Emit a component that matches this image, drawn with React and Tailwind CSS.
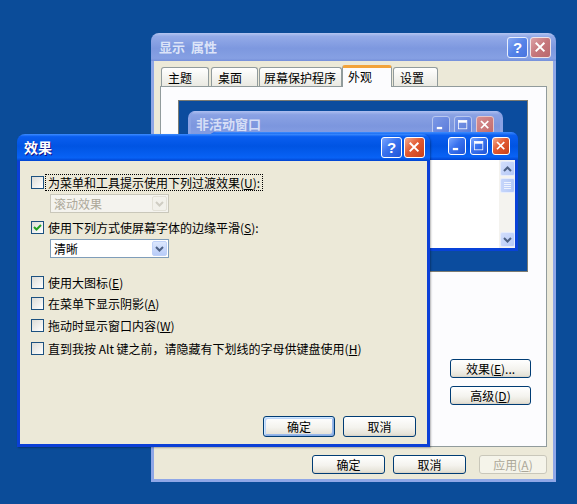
import React from "react";

const font = "font-['Noto_Sans_CJK_SC','Liberation_Sans',sans-serif]";

const capTones = {
  blue: "border-white bg-[linear-gradient(135deg,#7aa6ff_0%,#3a72ee_45%,#1f55d8_100%)]",
  red: "border-white bg-[linear-gradient(135deg,#f4ab8e_0%,#e25a32_45%,#c8401a_100%)]",
  dimBlue: "border-[#e8eefc] bg-[linear-gradient(135deg,#86a8f2_0%,#5583e8_50%,#4874df_100%)]",
  dimRed: "border-[#f1e4e6] bg-[linear-gradient(135deg,#dca2a6_0%,#c6767b_50%,#b9686e_100%)]",
  paleBlue: "border-[#b9c8ef] bg-[linear-gradient(135deg,#7d99e6_0%,#5a7bda_100%)]",
  paleRed: "border-[#e6c6c8] bg-[linear-gradient(135deg,#d68f92_0%,#c26b6c_100%)]",
};

function CapButton({ type, tone, size = "w-[21px] h-[21px]" }) {
  return (
    <div
      className={`${size} ${capTones[tone]} border rounded-[3px] flex items-center justify-center overflow-hidden shrink-0`}
    >
      {type === "help" && (
        <span className="font-['Liberation_Sans',sans-serif] text-[15px] font-bold leading-none text-white">
          ?
        </span>
      )}
      {type === "close" && (
        <svg viewBox="0 0 21 21" className="w-full h-full">
          <path d="M6 6 L14 14 M14 6 L6 14" stroke="white" strokeWidth="2.2" strokeLinecap="square" />
        </svg>
      )}
      {type === "min" && (
        <svg viewBox="0 0 21 21" className="w-full h-full">
          <rect x="5" y="13" width="7" height="3" fill="white" />
        </svg>
      )}
      {type === "max" && (
        <svg viewBox="0 0 21 21" className="w-full h-full">
          <rect x="4.5" y="4.5" width="11" height="11" fill="none" stroke="white" strokeWidth="1" />
          <rect x="4.5" y="4.5" width="11" height="3" fill="white" />
        </svg>
      )}
    </div>
  );
}

function XpButton({ children, className = "", isDefault, disabled }) {
  return (
    <div
      className={`${className} flex items-center justify-center rounded-[3px] border ${
        disabled
          ? "border-[#c9c7ba] bg-[#f5f4ea] text-[#aca899]"
          : "border-[#003c74] bg-[linear-gradient(to_bottom,#ffffff,#f4f3ee_55%,#e6e3d8_90%,#d6d0c5)] text-black"
      } ${
        isDefault
          ? "shadow-[inset_1px_1px_#cee7ff,inset_-1px_-1px_#89ade4,inset_2px_2px_#bcd4f6,inset_-2px_-2px_#98b8ea]"
          : ""
      }`}
    >
      {children}
    </div>
  );
}

function CheckBox({ checked }) {
  return (
    <div className="w-[13px] h-[13px] shrink-0 border border-[#1c5180] bg-[linear-gradient(135deg,#dcdcd7,#ffffff)] flex items-center justify-center">
      {checked && (
        <svg width="11" height="11" viewBox="0 0 11 11">
          <path d="M2 5 L4.5 7.5 L9 3" fill="none" stroke="#21a121" strokeWidth="2" />
        </svg>
      )}
    </div>
  );
}

function Row({ checked, focus, className = "", children }) {
  return (
    <div className={`flex items-center h-[17px] ${className}`}>
      <CheckBox checked={checked} />
      <span
        className={`ml-[2px] px-[2px] leading-[15px] whitespace-nowrap ${
          focus ? "outline outline-1 outline-dotted outline-black" : ""
        }`}
      >
        {children}
      </span>
    </div>
  );
}

function Combo({ value, disabled, className = "" }) {
  return (
    <div
      className={`${className} ml-[19px] w-[119px] h-[19px] flex border ${
        disabled ? "border-[#c9c7ba] bg-[#f4f3ee] text-[#aca899]" : "border-[#7f9db9] bg-white text-black"
      }`}
    >
      <span className="flex-1 pl-[3px] leading-[17px]">{value}</span>
      <span
        className={`m-px w-[15px] rounded-[2px] flex items-center justify-center border ${
          disabled
            ? "bg-[#f2f1eb] border-[#e3e1d7]"
            : "bg-[linear-gradient(to_bottom,#dce7fd,#b8ccf8)] border-[#bfd1f8]"
        }`}
      >
        <svg width="9" height="6" viewBox="0 0 9 6">
          <path d="M1 1 L4.5 4.5 L8 1" fill="none" stroke={disabled ? "#cfcdc3" : "#4d6185"} strokeWidth="2" />
        </svg>
      </span>
    </div>
  );
}

function ScrollBtn({ dir }) {
  return (
    <div className="w-[15px] h-[15px] mx-auto rounded-[2px] border border-[#e6ecfc] bg-[linear-gradient(135deg,#d2defc,#b6c9f6)] flex items-center justify-center">
      <svg width="9" height="6" viewBox="0 0 9 6">
        <path
          d={dir === "up" ? "M1 5 L4.5 1.5 L8 5" : "M1 1 L4.5 4.5 L8 1"}
          fill="none"
          stroke="#4d6185"
          strokeWidth="2"
        />
      </svg>
    </div>
  );
}

function Tab({ children, className = "", selected }) {
  if (selected) {
    return (
      <div
        className={`${className} relative top-px z-10 h-[22px] border-x border-[#919b9c] border-t-[3px] border-t-[#f2a33b] rounded-t-[3px] bg-[#fcfcfe] px-[5px] leading-[17px] whitespace-nowrap`}
      >
        {children}
      </div>
    );
  }
  return (
    <div
      className={`${className} h-[19px] border border-b-0 border-[#919b9c] rounded-t-[3px] bg-[linear-gradient(to_bottom,#ffffff,#f4f4f0_50%,#eae9e2)] leading-[19px] whitespace-nowrap overflow-hidden`}
    >
      {children}
    </div>
  );
}

function Preview() {
  return (
    <div className="relative ml-[17px] mt-[13px] w-[350px] h-[172px] border border-[#7b7b72] bg-[#0b4c9e] overflow-hidden">
      {/* inactive window */}
      <div className="absolute left-[9px] top-[10px] w-[315px] h-[120px] rounded-t-[7px] overflow-hidden bg-[#8aa2e4] border-x-[3px] border-[#8aa2e4]">
        <div className="h-[25px] flex items-center pl-[5px] pr-[6px] bg-[linear-gradient(to_bottom,#aebff0_0%,#8aa2e4_15%,#7c96de_60%,#869fe3_100%)]">
          <span className="text-[13px] font-bold text-[#d6def6]">非活动窗口</span>
          <div className="ml-auto flex gap-[4px] pt-[2px]">
            <CapButton type="min" tone="paleBlue" size="w-[18px] h-[18px]" />
            <CapButton type="max" tone="paleBlue" size="w-[18px] h-[18px]" />
            <CapButton type="close" tone="paleRed" size="w-[18px] h-[18px]" />
          </div>
        </div>
      </div>
      {/* active window */}
      <div className="absolute left-[30px] top-[31px] w-[309px] h-[119px] rounded-t-[7px] overflow-hidden flex flex-col bg-[#0842d8]">
        <div className="h-[28px] flex items-center pr-[8px] bg-[linear-gradient(to_bottom,#3d8cff_0%,#0a5ef0_12%,#0054e3_50%,#0862f5_88%,#0045d4_100%)]">
          <div className="ml-auto flex gap-[4px]">
            <CapButton type="min" tone="blue" size="w-[18px] h-[18px]" />
            <CapButton type="max" tone="blue" size="w-[18px] h-[18px]" />
            <CapButton type="close" tone="red" size="w-[18px] h-[18px]" />
          </div>
        </div>
        <div className="flex-1 flex mx-[3px] mb-[3px] bg-white">
          <div className="flex-1" />
          <div className="w-[16px] flex flex-col bg-[#f4f3ef] pt-[1px] pb-[1px]">
            <ScrollBtn dir="up" />
            <div className="mt-[2px] w-[15px] h-[15px] mx-auto rounded-[2px] border border-[#e6ecfc] bg-[linear-gradient(to_right,#c6d6fb,#b4c8f6)] flex flex-col items-center justify-center gap-[1px]">
              <div className="w-[7px] h-px bg-[#eef3fe]" />
              <div className="w-[7px] h-px bg-[#eef3fe]" />
              <div className="w-[7px] h-px bg-[#eef3fe]" />
              <div className="w-[7px] h-px bg-[#eef3fe]" />
            </div>
            <div className="flex-1" />
            <ScrollBtn dir="down" />
          </div>
        </div>
      </div>
    </div>
  );
}

function PropertiesWindow() {
  return (
    <div className="absolute left-[151px] top-[33px] w-[405px] h-[449px] flex flex-col rounded-t-[8px] overflow-hidden">
      <div className="h-[28px] shrink-0 flex items-center pl-[8px] pr-[5px] bg-[linear-gradient(to_bottom,#b4c5f1_0%,#93aae8_12%,#7d98df_55%,#86a0e3_90%,#7690da_100%)]">
        <span className="text-[13px] font-bold text-[#dce4f8]">显示&nbsp;&nbsp;属性</span>
        <div className="ml-auto flex gap-[2px]">
          <CapButton type="help" tone="dimBlue" />
          <CapButton type="close" tone="dimRed" />
        </div>
      </div>
      <div className="flex-1 flex flex-col bg-[#ece9d8] border-x-[3px] border-b-[3px] border-[#8fa7e7]">
        <div className="h-[25px] shrink-0 flex items-end pl-[7px]">
          <Tab className="w-[48px] pl-[6px]">主题</Tab>
          <Tab className="ml-[2px] w-[47px] pl-[6px]">桌面</Tab>
          <Tab className="ml-[1px] w-[83px] pl-[4px]">屏幕保护程序</Tab>
          <Tab className="w-[50px]" selected>
            外观
          </Tab>
          <Tab className="ml-[1px] w-[45px] pl-[6px]">设置</Tab>
        </div>
        <div className="ml-[6px] w-[387px] h-[361px] shrink-0 flex flex-col border border-[#919b9c] bg-[#fcfcfe]">
          <Preview />
          <div className="mt-[87px] pr-[15px] flex flex-col items-end gap-[8px]">
            <XpButton className="w-[81px] h-[19px]">
              效果(<u>E</u>)...
            </XpButton>
            <XpButton className="w-[81px] h-[19px]">
              高级(<u>D</u>)
            </XpButton>
          </div>
        </div>
        <div className="mt-[8px] pr-[6px] flex justify-end">
          <XpButton className="w-[73px] h-[19px]">确定</XpButton>
          <XpButton className="ml-[8px] w-[73px] h-[19px]">取消</XpButton>
          <XpButton className="ml-[13px] w-[68px] h-[19px]" disabled>
            应用(<u>A</u>)
          </XpButton>
        </div>
      </div>
    </div>
  );
}

function EffectsDialog() {
  return (
    <div className="absolute left-[17px] top-[134px] w-[413px] h-[313px] flex flex-col rounded-t-[8px] overflow-hidden shadow-[1px_1px_2px_rgba(0,0,0,0.3)]">
      <div className="h-[27px] shrink-0 flex items-center pl-[7px] pr-[5px] bg-[linear-gradient(to_bottom,#3d8cff_0%,#0a5ef0_10%,#0054e3_45%,#0862f5_88%,#0043d0_100%)]">
        <span className="text-[14px] font-bold text-white [text-shadow:1px_1px_#0f1089]">效果</span>
        <div className="ml-auto flex gap-[2px]">
          <CapButton type="help" tone="blue" />
          <CapButton type="close" tone="red" />
        </div>
      </div>
      <div className="flex-1 flex flex-col bg-[#ece9d8] border-x-[3px] border-b-[3px] border-[#0b3fd6] pl-[11px] pt-[13px]">
        <Row focus>
          为菜单和工具提示使用下列过渡效果(<u>U</u>):
        </Row>
        <Combo className="mt-[3px]" value="滚动效果" disabled />
        <Row className="mt-[6px]" checked>
          使用下列方式使屏幕字体的边缘平滑(<u>S</u>):
        </Row>
        <Combo className="mt-[3px]" value="清晰" />
        <Row className="mt-[16px]">
          使用大图标(<u>E</u>)
        </Row>
        <Row className="mt-[4px]">
          在菜单下显示阴影(<u>A</u>)
        </Row>
        <Row className="mt-[5px]">
          拖动时显示窗口内容(<u>W</u>)
        </Row>
        <Row className="mt-[6px]">
          直到我按 Alt 键之前，请隐藏有下划线的字母供键盘使用(<u>H</u>)
        </Row>
        <div className="flex-1" />
        <div className="pr-[11px] pb-[7px] flex justify-end">
          <XpButton className="w-[72px] h-[21px]" isDefault>
            确定
          </XpButton>
          <XpButton className="ml-[8px] w-[73px] h-[21px]">取消</XpButton>
        </div>
      </div>
    </div>
  );
}

export default function App() {
  return (
    <div className={`relative w-[577px] h-[504px] overflow-hidden bg-[#0b4c99] text-[12px] text-black ${font}`}>
      <PropertiesWindow />
      <EffectsDialog />
    </div>
  );
}
